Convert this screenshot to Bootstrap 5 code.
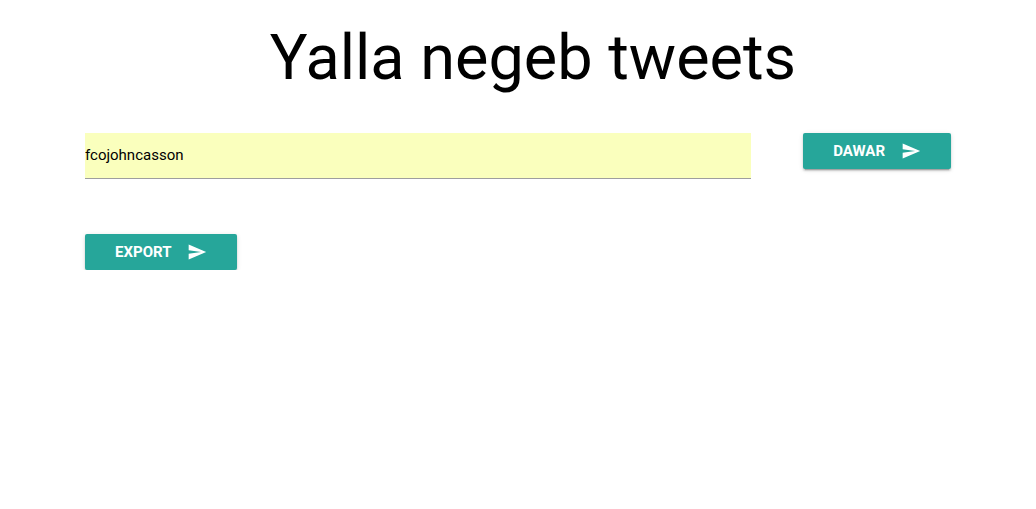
<!DOCTYPE html>
<html lang="en">
<head>
<meta charset="utf-8">
<meta name="viewport" content="width=device-width, initial-scale=1">
<title>Yalla negeb tweets</title>
<link href="https://cdn.jsdelivr.net/npm/bootstrap@5.3.0/dist/css/bootstrap.min.css" rel="stylesheet">
<style>
body { font-family: Roboto, sans-serif; font-size: 15px; color: #000; background: #fff; }
.page { max-width: 1280px; padding: 23px 85px 0; }
.page-title { font-size: 63px; line-height: 70px; font-weight: 400; margin: 0 0 40px 30px; }
.query-col { width: 76.9%; }
.query { height: 46px; padding: 0 0 2px; font-size: 15px; color: #000; background: #faffbd; border: 0; border-bottom: 1px solid #9e9e9e; border-radius: 0; }
.query:focus { background: #faffbd; box-shadow: none; border-color: #26a69a; }
.btn-teal { --bs-btn-color: #fff; --bs-btn-bg: #26a69a; --bs-btn-border-width: 0; --bs-btn-hover-color: #fff; --bs-btn-hover-bg: #2bbbad; --bs-btn-active-color: #fff; --bs-btn-active-bg: #2bbbad; --bs-btn-box-shadow: none; height: 36px; padding: 0 30px; border-radius: 2px; font-size: 15px; font-weight: 700; line-height: 36px; box-shadow: 0 2px 2px rgba(0,0,0,.14), 0 1px 5px rgba(0,0,0,.12), 0 3px 1px -2px rgba(0,0,0,.2); }
.btn-teal svg { width: 20px; height: 20px; margin-left: 16px; }
.export-row { margin-top: 55px; }
</style>
<script src="https://cdn.jsdelivr.net/npm/bootstrap@5.3.0/dist/js/bootstrap.bundle.min.js" defer></script>
</head>
<body>
<main class="page mx-auto">
  <h1 class="page-title text-center">Yalla negeb tweets</h1>
  <form onsubmit="return false">
    <div class="d-flex justify-content-between align-items-start">
      <div class="query-col"><input class="form-control query" type="text" value="fcojohncasson" aria-label="Twitter user"></div>
      <button class="btn btn-teal text-uppercase d-inline-flex align-items-center" type="submit">Dawar<svg viewBox="0 0 24 24" fill="currentColor" aria-hidden="true"><path d="M2.01 21L23 12 2.01 3 2 10l15 2-15 2z"/></svg></button>
    </div>
    <div class="export-row">
      <button class="btn btn-teal text-uppercase d-inline-flex align-items-center" type="button">Export<svg viewBox="0 0 24 24" fill="currentColor" aria-hidden="true"><path d="M2.01 21L23 12 2.01 3 2 10l15 2-15 2z"/></svg></button>
    </div>
  </form>
</main>
</body>
</html>
